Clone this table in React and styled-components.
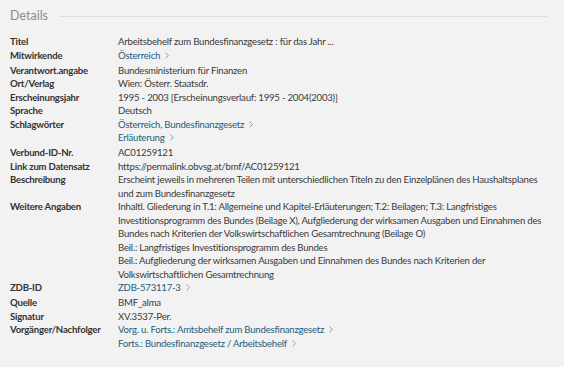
import React from 'react';
import styled, { createGlobalStyle } from 'styled-components';

const GlobalStyle = createGlobalStyle`
  html, body {
    margin: 0;
    padding: 0;
    background: #f2f2f2;
  }
  body {
    font-family: Lato, "Liberation Sans", sans-serif;
    color: #333;
  }
`;

const details = [
  { label: 'Titel', lines: ['Arbeitsbehelf zum Bundesfinanzgesetz : für das Jahr ...'] },
  { label: 'Mitwirkende', links: ['Österreich'] },
  { label: 'Verantwort.angabe', lines: ['Bundesministerium für Finanzen'] },
  { label: 'Ort/Verlag', lines: ['Wien: Österr. Staatsdr.'] },
  { label: 'Erscheinungsjahr', lines: ['1995 - 2003 [Erscheinungsverlauf: 1995 - 2004(2003)]'] },
  { label: 'Sprache', lines: ['Deutsch'] },
  { label: 'Schlagwörter', links: ['Österreich, Bundesfinanzgesetz', 'Erläuterung'] },
  { label: 'Verbund-ID-Nr.', lines: ['AC01259121'] },
  { label: 'Link zum Datensatz', lines: ['https://permalink.obvsg.at/bmf/AC01259121'] },
  {
    label: 'Beschreibung',
    lines: [
      'Erscheint jeweils in mehreren Teilen mit unterschiedlichen Titeln zu den Einzelplänen des Haushaltsplanes',
      'und zum Bundesfinanzgesetz',
    ],
  },
  {
    label: 'Weitere Angaben',
    lines: [
      'Inhaltl. Gliederung in T.1: Allgemeine und Kapitel-Erläuterungen; T.2: Beilagen; T.3: Langfristiges',
      'Investitionsprogramm des Bundes (Beilage X), Aufgliederung der wirksamen Ausgaben und Einnahmen des',
      'Bundes nach Kriterien der Volkswirtschaftlichen Gesamtrechnung (Beilage O)',
      'Beil.: Langfristiges Investitionsprogramm des Bundes',
      'Beil.: Aufgliederung der wirksamen Ausgaben und Einnahmen des Bundes nach Kriterien der',
      'Volkswirtschaftlichen Gesamtrechnung',
    ],
  },
  { label: 'ZDB-ID', links: ['ZDB-573117-3'] },
  { label: 'Quelle', lines: ['BMF_alma'] },
  { label: 'Signatur', lines: ['XV.3537-Per.'] },
  {
    label: 'Vorgänger/Nachfolger',
    links: ['Vorg. u. Forts.: Amtsbehelf zum Bundesfinanzgesetz', 'Forts.: Bundesfinanzgesetz / Arbeitsbehelf'],
  },
];

const Chevron = () => (
  <ChevronIcon viewBox="0 0 4 7" width="4" height="7">
    <path d="M0.6 0.6 L3.3 3.5 L0.6 6.4" fill="none" stroke="currentColor" strokeWidth="1" />
  </ChevronIcon>
);

export default function App() {
  return (
    <>
      <GlobalStyle />
      <Section>
        <Heading>
          <HeadingText>Details</HeadingText>
          <Rule />
        </Heading>
        <List>
          {details.map((row) => (
            <Row key={row.label}>
              <Label>{row.label}</Label>
              <Value>
                {row.lines && row.lines.map((l, i) => <Line key={i}>{l}</Line>)}
                {row.links && (
                  <Links>
                    {row.links.map((l, i) => (
                      <LinkLine key={i}>
                        <Link href="#">{l}</Link>
                        <Chevron />
                      </LinkLine>
                    ))}
                  </Links>
                )}
              </Value>
            </Row>
          ))}
        </List>
      </Section>
    </>
  );
}

const Section = styled.section`
  padding: 7px 17px 0 10px;
`;

const Heading = styled.div`
  display: flex;
  align-items: center;
  height: 18px;
`;

const HeadingText = styled.h2`
  margin: 0;
  font-size: 12.5px;
  font-weight: 400;
  color: #8c8c8c;
  line-height: 18px;
`;

const Rule = styled.div`
  flex: 1;
  height: 1px;
  background: #dedede;
  margin-left: 12px;
`;

const List = styled.dl`
  margin: 10px 0 0;
`;

const Row = styled.div`
  display: grid;
  grid-template-columns: 108px 1fr;
  font-size: 9.6px;
  letter-spacing: -0.22px;
  line-height: 13.5px;
`;

const Label = styled.dt`
  font-weight: 700;
  color: #333;
`;

const Value = styled.dd`
  margin: 0;
  color: #3a3a3a;
`;

const Line = styled.div`
  white-space: nowrap;
`;

const Links = styled.div`
  padding-bottom: 1.5px;
`;

const LinkLine = styled.div`
  display: flex;
  align-items: center;
  white-space: nowrap;
`;

const Link = styled.a`
  color: #1f5b7a;
  text-decoration: none;
`;

const ChevronIcon = styled.svg`
  margin-left: 5px;
  color: #8aa0ad;
`;
